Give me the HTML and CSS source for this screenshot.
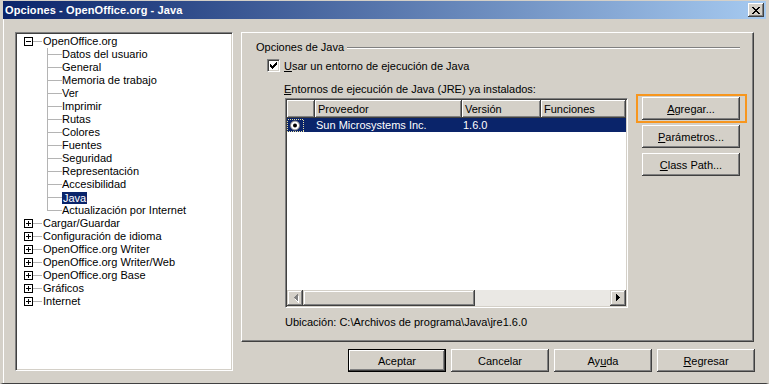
FILE: index.html
```html
<!DOCTYPE html>
<html lang="es">
<head>
<meta charset="utf-8">
<title>Opciones - OpenOffice.org - Java</title>
<link rel="stylesheet" href="styles.css">
</head>
<body>
<div class="window">
  <div class="titlebar">
    <span class="title">Opciones - OpenOffice.org - Java</span>
    <span class="close"><svg width="8" height="7" viewBox="0 0 8 7" shape-rendering="crispEdges"><path d="M0 0h2v1h-2z M6 0h2v1h-2z M1 1h2v1h-2z M5 1h2v1h-2z M2 2h4v1h-4z M3 3h2v1h-2z M2 4h4v1h-4z M1 5h2v1h-2z M5 5h2v1h-2z M0 6h2v1h-2z M6 6h2v1h-2z" fill="#000"/></svg></span>
  </div>
  <div class="content">
    <div class="tree">
      <div class="row root"><svg class="exp" width="9" height="9" viewBox="0 0 9 9" shape-rendering="crispEdges"><rect x="0.5" y="0.5" width="8" height="8" fill="#fff" stroke="#000"/><path d="M2 4h5v1h-5z" fill="#000"/></svg><span class="hl"></span><span class="lbl">OpenOffice.org</span></div>
      <div class="row child"><span class="conn"></span><span class="lbl">Datos del usuario</span></div>
      <div class="row child"><span class="conn"></span><span class="lbl">General</span></div>
      <div class="row child"><span class="conn"></span><span class="lbl">Memoria de trabajo</span></div>
      <div class="row child"><span class="conn"></span><span class="lbl">Ver</span></div>
      <div class="row child"><span class="conn"></span><span class="lbl">Imprimir</span></div>
      <div class="row child"><span class="conn"></span><span class="lbl">Rutas</span></div>
      <div class="row child"><span class="conn"></span><span class="lbl">Colores</span></div>
      <div class="row child"><span class="conn"></span><span class="lbl">Fuentes</span></div>
      <div class="row child"><span class="conn"></span><span class="lbl">Seguridad</span></div>
      <div class="row child"><span class="conn"></span><span class="lbl">Representación</span></div>
      <div class="row child"><span class="conn"></span><span class="lbl">Accesibilidad</span></div>
      <div class="row child"><span class="conn"></span><span class="lbl sel">Java</span></div>
      <div class="row child last"><span class="conn"></span><span class="lbl">Actualización por Internet</span></div>
      <div class="row root"><svg class="exp" width="9" height="9" viewBox="0 0 9 9" shape-rendering="crispEdges"><rect x="0.5" y="0.5" width="8" height="8" fill="#fff" stroke="#000"/><path d="M2 4h5v1h-5z M4 2h1v5h-1z" fill="#000"/></svg><span class="hl"></span><span class="lbl">Cargar/Guardar</span></div>
      <div class="row root"><svg class="exp" width="9" height="9" viewBox="0 0 9 9" shape-rendering="crispEdges"><rect x="0.5" y="0.5" width="8" height="8" fill="#fff" stroke="#000"/><path d="M2 4h5v1h-5z M4 2h1v5h-1z" fill="#000"/></svg><span class="hl"></span><span class="lbl">Configuración de idioma</span></div>
      <div class="row root"><svg class="exp" width="9" height="9" viewBox="0 0 9 9" shape-rendering="crispEdges"><rect x="0.5" y="0.5" width="8" height="8" fill="#fff" stroke="#000"/><path d="M2 4h5v1h-5z M4 2h1v5h-1z" fill="#000"/></svg><span class="hl"></span><span class="lbl">OpenOffice.org Writer</span></div>
      <div class="row root"><svg class="exp" width="9" height="9" viewBox="0 0 9 9" shape-rendering="crispEdges"><rect x="0.5" y="0.5" width="8" height="8" fill="#fff" stroke="#000"/><path d="M2 4h5v1h-5z M4 2h1v5h-1z" fill="#000"/></svg><span class="hl"></span><span class="lbl">OpenOffice.org Writer/Web</span></div>
      <div class="row root"><svg class="exp" width="9" height="9" viewBox="0 0 9 9" shape-rendering="crispEdges"><rect x="0.5" y="0.5" width="8" height="8" fill="#fff" stroke="#000"/><path d="M2 4h5v1h-5z M4 2h1v5h-1z" fill="#000"/></svg><span class="hl"></span><span class="lbl">OpenOffice.org Base</span></div>
      <div class="row root"><svg class="exp" width="9" height="9" viewBox="0 0 9 9" shape-rendering="crispEdges"><rect x="0.5" y="0.5" width="8" height="8" fill="#fff" stroke="#000"/><path d="M2 4h5v1h-5z M4 2h1v5h-1z" fill="#000"/></svg><span class="hl"></span><span class="lbl">Gráficos</span></div>
      <div class="row root"><svg class="exp" width="9" height="9" viewBox="0 0 9 9" shape-rendering="crispEdges"><rect x="0.5" y="0.5" width="8" height="8" fill="#fff" stroke="#000"/><path d="M2 4h5v1h-5z M4 2h1v5h-1z" fill="#000"/></svg><span class="hl"></span><span class="lbl">Internet</span></div>
    </div>
    <div class="right">
      <div class="panel">
        <div class="group-title"><span>Opciones de Java</span><span class="sep"></span></div>
        <div class="check-row">
          <span class="chk"><svg width="7" height="7" viewBox="0 0 7 7" shape-rendering="crispEdges"><path d="M6 0h1v1h-1z M5 1h2v1h-2z M0 2h1v1h-1z M4 2h3v1h-3z M0 3h2v1h-2z M3 3h3v1h-3z M0 4h5v1h-5z M1 5h3v1h-3z M2 6h1v1h-1z" fill="#000"/></svg></span>
          <span class="check-label"><u>U</u>sar un entorno de ejecución de Java</span>
        </div>
        <div class="list-label"><u>E</u>ntornos de ejecución de Java (JRE) ya instalados:</div>
        <div class="jre-area">
          <div class="jre">
            <div class="thead">
              <div class="th c0"></div>
              <div class="th c1">Proveedor</div>
              <div class="th c2">Versión</div>
              <div class="th c3">Funciones</div>
            </div>
            <div class="tbody">
              <div class="tr selected">
                <div class="td c0"><svg width="18" height="13" viewBox="0 0 18 13"><rect x="0.5" y="0.5" width="16" height="12" fill="none" stroke="#E6DFA8" stroke-dasharray="1 1" shape-rendering="crispEdges"/><circle cx="8" cy="6.5" r="4.5" fill="#fff" stroke="#808080"/><circle cx="8" cy="6.5" r="2" fill="#000"/></svg></div>
                <div class="td c1">Sun Microsystems Inc.</div>
                <div class="td c2">1.6.0</div>
                <div class="td c3"></div>
              </div>
            </div>
            <div class="hscroll">
              <span class="sbtn"><svg width="16" height="16" viewBox="0 0 16 16" shape-rendering="crispEdges"><path d="M10 5h1v7h-1z M9 6h1v5h-1z M8 7h1v3h-1z M7 8h1v1h-1z" fill="#fff" transform="translate(1,1)"/><path d="M10 4h1v7h-1z M9 5h1v5h-1z M8 6h1v3h-1z M7 7h1v1h-1z" fill="#808080"/></svg></span>
              <span class="thumb"></span>
              <span class="track"></span>
              <span class="sbtn"><svg width="16" height="16" viewBox="0 0 16 16" shape-rendering="crispEdges"><path d="M6 4h1v7h-1z M7 5h1v5h-1z M8 6h1v3h-1z M9 7h1v1h-1z" fill="#000"/></svg></span>
            </div>
          </div>
          <div class="side-buttons">
            <span class="highlight"><button class="btn"><u>A</u>gregar...</button></span>
            <button class="btn"><u>P</u>arámetros...</button>
            <button class="btn"><u>C</u>lass Path...</button>
          </div>
        </div>
        <div class="location">Ubicación: C:\Archivos de programa\Java\jre1.6.0</div>
      </div>
      <div class="actions">
        <button class="btn default">Aceptar</button>
        <button class="btn">Cancelar</button>
        <button class="btn">Ay<u>u</u>da</button>
        <button class="btn"><u>R</u>egresar</button>
      </div>
    </div>
  </div>
</div>
</body>
</html>
```

FILE: styles.css
```css
* { box-sizing: border-box; }

html, body {
  margin: 0;
  padding: 0;
}

body {
  width: 769px;
  height: 384px;
  overflow: hidden;
  background: #D4D0C8;
  font-family: "Liberation Sans", Arial, sans-serif;
  font-size: 11px;
  color: #000;
}

.window {
  width: 769px;
  height: 384px;
  background: #D4D0C8;
  border-style: solid;
  border-width: 1px 3px 1px 3px;
  border-color: #D4D0C8 #D4D0C8 #404040 #D4D0C8;
  box-shadow: inset 1px 0 #fff;
}

.titlebar {
  height: 18px;
  display: flex;
  align-items: center;
  justify-content: space-between;
  padding: 0 2px 0 2px;
  background: linear-gradient(to right, #0A246A, #A6CAF0);
}

.title {
  color: #fff;
  font-weight: bold;
  font-size: 11px;
  letter-spacing: 0.1px;
}

.close {
  width: 16px;
  height: 14px;
  display: flex;
  align-items: center;
  justify-content: center;
  background: #D4D0C8;
  box-shadow: inset -1px -1px #404040, inset 1px 1px #fff, inset -2px -2px #808080;
  padding-right: 1px;
}

.content {
  display: grid;
  grid-template-columns: 218px 513px;
  column-gap: 8px;
  padding: 13px 0 0 12px;
}

/* Tree */
.tree {
  height: 339px;
  background: #fff;
  border: 1px solid;
  border-color: #808080 #fff #fff #808080;
  box-shadow: inset 1px 1px #404040, inset -1px -1px #D4D0C8;
  padding-top: 2px;
  padding-left: 1px;
}

.row {
  height: 13px;
  line-height: 13px;
  display: flex;
  align-items: center;
  white-space: nowrap;
}

.root { padding-left: 7px; }
.child { padding-left: 30px; }

.exp { display: block; flex: none; }

.hl {
  width: 9px;
  height: 1px;
  background: #B4B4B4;
  flex: none;
}

.root .lbl { padding-left: 1px; }

.conn {
  width: 15px;
  height: 13px;
  flex: none;
  background:
    linear-gradient(#B4B4B4, #B4B4B4) 0 0 / 1px 100% no-repeat,
    linear-gradient(#B4B4B4, #B4B4B4) 0 6px / 15px 1px no-repeat;
}

.last .conn {
  background:
    linear-gradient(#B4B4B4, #B4B4B4) 0 0 / 1px 7px no-repeat,
    linear-gradient(#B4B4B4, #B4B4B4) 0 6px / 15px 1px no-repeat;
}

.child .lbl { padding-left: 0; }

.lbl.sel {
  background: #0A246A;
  color: #fff;
  height: 12px;
  line-height: 12px;
  padding: 0 1px 0 1px;
}

/* Right side */
.right {
  display: flex;
  flex-direction: column;
  gap: 7px;
}

.panel {
  height: 310px;
  border: 1px solid;
  border-color: #fff #404040 #404040 #fff;
  box-shadow: inset -1px -1px #808080;
  padding: 8px 13px 0 14px;
}

.group-title {
  height: 13px;
  line-height: 13px;
  display: flex;
  align-items: center;
}

.sep {
  flex: 1;
  height: 2px;
  margin-left: 3px;
  border-top: 1px solid #808080;
  border-bottom: 1px solid #fff;
}

.check-row {
  margin-top: 5px;
  height: 13px;
  display: flex;
  align-items: center;
  padding-left: 11px;
}

.chk {
  width: 13px;
  height: 13px;
  flex: none;
  display: flex;
  align-items: center;
  justify-content: center;
  background: #fff;
  border: 1px solid;
  border-color: #808080 #fff #fff #808080;
  box-shadow: inset 1px 1px #404040, inset -1px -1px #D4D0C8;
}

.check-label {
  margin-left: 4px;
  line-height: 13px;
  padding-top: 1px;
}

.list-label {
  margin-top: 10px;
  height: 13px;
  line-height: 14px;
  padding-left: 28px;
}

.jre-area {
  margin-top: 3px;
  padding-left: 29px;
  display: flex;
  align-items: flex-start;
}

.jre {
  width: 343px;
  height: 210px;
  flex: none;
  background: #fff;
  border: 1px solid;
  border-color: #808080 #fff #fff #808080;
  box-shadow: inset 1px 1px #404040, inset -1px -1px #D4D0C8;
  padding: 1px;
  display: flex;
  flex-direction: column;
}

.thead {
  height: 18px;
  display: flex;
  flex: none;
}

.th {
  height: 18px;
  line-height: 19px;
  padding-left: 3px;
  background: #D4D0C8;
  box-shadow: inset -1px -1px #404040, inset 1px 1px #fff, inset -2px -2px #808080;
  white-space: nowrap;
}

.c0 { width: 28px; flex: none; }
.c1 { width: 147px; flex: none; }
.c2 { width: 79px; flex: none; }
.c3 { flex: 1; }

.tbody {
  flex: 1;
  background: #fff;
}

.tr {
  height: 14px;
  display: flex;
}

.tr.selected {
  background: #0A246A;
  color: #fff;
}

.td {
  height: 14px;
  line-height: 15px;
  padding-left: 1px;
  white-space: nowrap;
}

.td.c0 {
  padding-left: 0;
  display: flex;
  align-items: center;
}

.td.c0 svg { display: block; }

.hscroll {
  height: 16px;
  flex: none;
  display: flex;
}

.sbtn {
  width: 16px;
  height: 16px;
  flex: none;
  background: #D4D0C8;
  box-shadow: inset -1px -1px #404040, inset 1px 1px #D4D0C8, inset -2px -2px #808080, inset 2px 2px #fff;
}

.sbtn svg { display: block; }

.thumb {
  width: 172px;
  height: 16px;
  flex: none;
  background: #D4D0C8;
  box-shadow: inset -1px -1px #404040, inset 1px 1px #D4D0C8, inset -2px -2px #808080, inset 2px 2px #fff;
}

.track {
  flex: 1;
  height: 16px;
  background: #EAE8E4;
}

.side-buttons {
  margin-left: 14px;
  margin-top: -1px;
  display: flex;
  flex-direction: column;
  gap: 5px;
}

.btn {
  width: 98px;
  height: 23px;
  padding: 0;
  margin: 0;
  border: none;
  background: #D4D0C8;
  font-family: "Liberation Sans", Arial, sans-serif;
  font-size: 11px;
  color: #000;
  box-shadow: inset -1px -1px #404040, inset 1px 1px #fff, inset -2px -2px #808080, inset 2px 2px #D4D0C8;
  display: flex;
  align-items: center;
  justify-content: center;
}

.btn.default {
  border: 1px solid #000;
}

.highlight {
  position: relative;
  display: block;
  width: 98px;
  height: 23px;
}

.highlight::after {
  content: "";
  position: absolute;
  top: -3px;
  left: -6px;
  right: -7px;
  bottom: -3px;
  border: 2px solid #F7961E;
  pointer-events: none;
}

.location {
  margin-top: 8px;
  height: 13px;
  line-height: 13px;
  padding-left: 29px;
}

.actions {
  display: flex;
  justify-content: flex-end;
  gap: 5px;
  margin-right: -1px;
}
```
